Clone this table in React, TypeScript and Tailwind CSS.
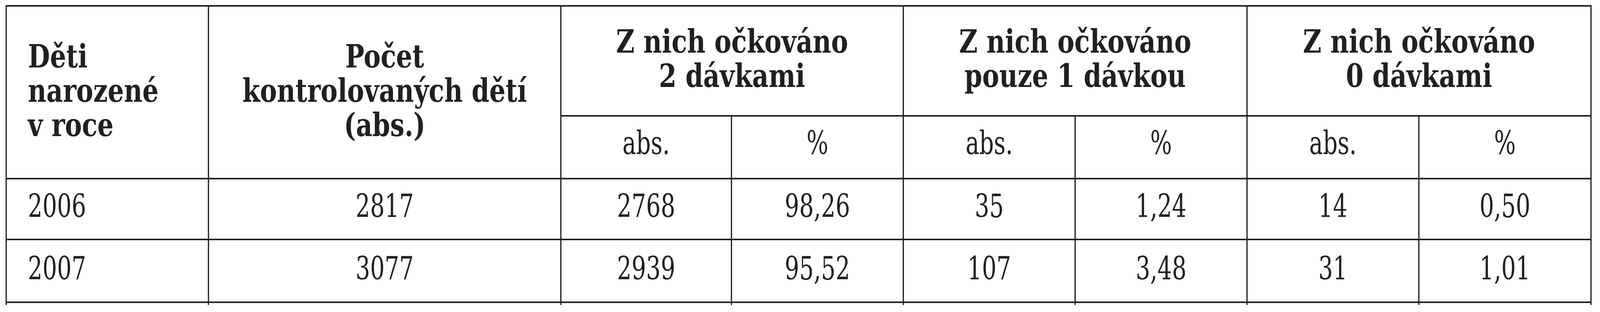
import React from "react";

function Cell({
  children,
  className = "",
}: {
  children?: React.ReactNode;
  className?: string;
}) {
  return (
    <div className={`bg-white flex items-center ${className}`}>{children}</div>
  );
}

const groups = [
  ["Z nich očkováno", "2 dávkami"],
  ["Z nich očkováno", "pouze 1 dávkou"],
  ["Z nich očkováno", "0 dávkami"],
];

const rows = [
  { pad: "pb-[15px]", cells: ["2006", "2817", "2768", "98,26", "35", "1,24", "14", "0,50"] },
  { pad: "pb-[12px]", cells: ["2007", "3077", "2939", "95,52", "107", "3,48", "31", "1,01"] },
];

const DESIGN_W = 5158;

export default function App() {
  // the table is laid out at the reference's 5158px width and fitted to the window width
  const fit =
    typeof window !== "undefined"
      ? Math.min(1, window.innerWidth / DESIGN_W)
      : 1;

  return (
    <div className="bg-white w-full h-[800px] overflow-hidden">
      <div
        className="w-[5158px] h-[800px] origin-top-left pl-[18px] pt-[13px]"
        style={{ transform: `scaleX(${fit})` }}
      >
        <div className="grid w-fit bg-[#231f20] pt-[4px] px-[4px] gap-[4px] grid-cols-[648px_1132px_546px_550px_550px_550px_550px_551px] grid-rows-[278px_157px_152px_157px_5px] text-[#231f20] text-[82px] leading-[88px] font-['DejaVu_Serif_Condensed','DejaVu_Serif',serif]">
          {/* header */}
          <Cell className="row-span-2 pl-[68px] font-bold font-['DejaVu_Serif',serif]">
            <div className="pb-[9px]">
              Děti
              <br />
              narozené
              <br />v roce
            </div>
          </Cell>
          <Cell className="row-span-2 justify-center text-center font-bold font-['DejaVu_Serif',serif]">
            <div className="pb-[9px]">
              Počet
              <br />
              kontrolovaných dětí
              <br />
              (abs.)
            </div>
          </Cell>
          {groups.map((g, i) => (
            <Cell
              key={i}
              className="col-span-2 justify-center text-center font-bold font-['DejaVu_Serif',serif]"
            >
              <div className="pb-[13px]">
                {g[0]}
                <br />
                {g[1]}
              </div>
            </Cell>
          ))}
          {groups.map((_, i) => (
            <React.Fragment key={i}>
              <Cell className="justify-center">
                <div className="pb-[21px]">abs.</div>
              </Cell>
              <Cell className="justify-center">
                <div className="pb-[21px]">%</div>
              </Cell>
            </React.Fragment>
          ))}

          {/* data rows */}
          {rows.map((r, ri) => (
            <React.Fragment key={ri}>
              {r.cells.map((v, ci) => (
                <Cell
                  key={ci}
                  className={ci === 0 ? "pl-[68px]" : "justify-center"}
                >
                  <div className={r.pad}>{v}</div>
                </Cell>
              ))}
            </React.Fragment>
          ))}

          {/* rule ends that run past the bottom line */}
          {Array.from({ length: 8 }).map((_, i) => (
            <Cell key={`t${i}`} />
          ))}
        </div>
      </div>
    </div>
  );
}
